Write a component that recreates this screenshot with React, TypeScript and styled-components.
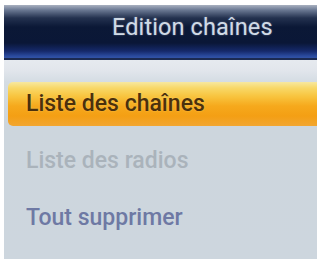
import React from "react";
import styled, { createGlobalStyle } from "styled-components";

const Global = createGlobalStyle`
  html, body { margin: 0; padding: 0; background: #ffffff; }
  body { width: 317px; height: 259px; overflow: hidden; font-family: Roboto, "Liberation Sans", sans-serif; }
`;

const Screen = styled.div`
  margin: 5px 0 0 4px;
  width: 313px;
  height: 254px;
  display: flex;
  flex-direction: column;
  background: #cfd8df;
`;

const Header = styled.header`
  height: 55px;
  flex: none;
  display: flex;
  align-items: flex-start;
  padding-left: 108px;
  box-sizing: border-box;
  border-bottom: 2px solid #1b2a52;
  background: linear-gradient(
    to bottom,
    #a9b1c0 0px,
    #6a7893 5px,
    #23314f 13px,
    #0b1836 22px,
    #0a1737 38px,
    #15296a 46px,
    #2a4a9e 51px,
    #3b5cae 55px
  );
`;

const Title = styled.h1`
  margin: 0;
  padding-top: 9px;
  font-size: 23.5px;
  font-weight: 400;
  line-height: 27px;
  color: #d0dae6;
  letter-spacing: 0.1px;
  text-shadow: 0 0 2px rgba(200, 215, 235, 0.45);
`;

const Menu = styled.ul`
  list-style: none;
  margin: 0;
  padding: 22px 0 0 4px;
  flex: 1;
  display: flex;
  flex-direction: column;
  gap: 13px;
  background: linear-gradient(to bottom, #e6eaef 0px, #e2e6ec 10px, #d4dce3 22px, #cdd6dd 60px, #cdd6de 100%);
`;

const Item = styled.li<{ $state: "selected" | "disabled" | "normal" }>`
  height: 44px;
  line-height: 44px;
  padding-left: 18px;
  font-size: 23px;
  font-weight: 500;
  border-radius: 5px 0 0 5px;
  color: ${(p) =>
    p.$state === "selected" ? "#4b300c" : p.$state === "disabled" ? "#aab3bb" : "#6e79a4"};
  background: ${(p) =>
    p.$state === "selected"
      ? "linear-gradient(to bottom, #f7e8a0 0px, #f8d868 6px, #f8c540 14px, #f6a91c 24px, #f49f14 34px, #f2a630 44px)"
      : "transparent"};
  text-shadow: ${(p) =>
    p.$state === "selected" ? "0 0 2px rgba(255, 220, 120, 0.6)" : "none"};
`;

export default function App() {
  return (
    <>
      <Global />
      <Screen>
        <Header>
          <Title>Edition chaînes</Title>
        </Header>
        <Menu>
          <Item $state="selected">Liste des chaînes</Item>
          <Item $state="disabled">Liste des radios</Item>
          <Item $state="normal">Tout supprimer</Item>
        </Menu>
      </Screen>
    </>
  );
}
